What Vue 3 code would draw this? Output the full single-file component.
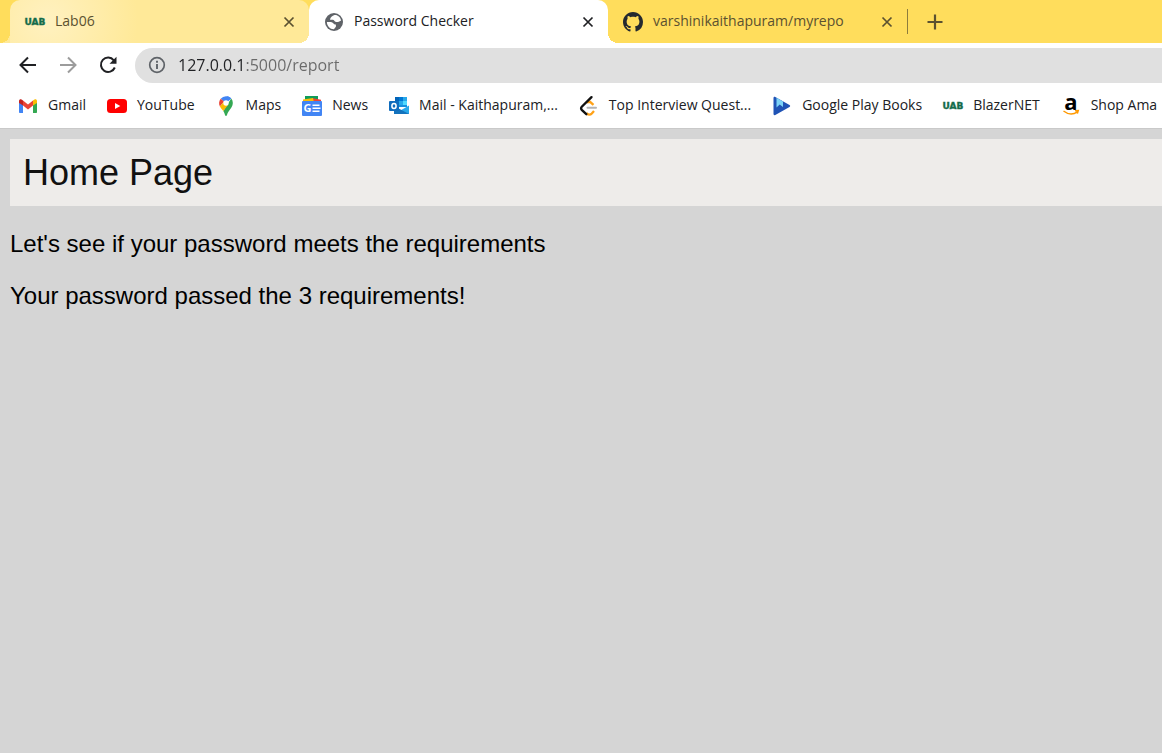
<script setup>
import { ref } from 'vue'

const address = ref('127.0.0.1:5000/report')

const tabs = [
  { icon: 'uab', title: 'Lab06', state: 'glow' },
  { icon: 'globe', title: 'Password Checker', state: 'active' },
  { icon: 'github', title: 'varshinikaithapuram/myrepo', state: 'idle' },
]

const bookmarks = [
  { icon: 'gmail', label: 'Gmail' },
  { icon: 'youtube', label: 'YouTube' },
  { icon: 'maps', label: 'Maps' },
  { icon: 'news', label: 'News' },
  { icon: 'outlook', label: 'Mail - Kaithapuram,...' },
  { icon: 'leetcode', label: 'Top Interview Quest...' },
  { icon: 'play', label: 'Google Play Books' },
  { icon: 'uab', label: 'BlazerNET' },
  { icon: 'amazon', label: 'Shop Ama' },
]
</script>

<template>
  <div class="browser">
    <header class="chrome">
      <div class="tab-strip" role="tablist">
        <div v-for="tab in tabs" :key="tab.title" class="tab" :class="tab.state">
          <button class="tab-main" type="button" role="tab" :aria-selected="tab.state === 'active'">
            <svg v-if="tab.icon === 'uab'" class="icon" viewBox="0 0 20 20" aria-hidden="true">
              <text class="uab-text" x="10" y="13" text-anchor="middle">UAB</text>
            </svg>
            <svg v-else-if="tab.icon === 'globe'" class="icon" viewBox="0 0 20 20" aria-hidden="true">
              <circle cx="10" cy="10" r="9" fill="#5f6368" />
              <path d="M10.500 3C8.200 3.600 6.300 5.300 6 7.800h2.800c1.500 0 1.500 2.200 3.200 2.200h2c1 0 1.500-1.300 3-1.300C16.800 5.300 14 2.800 10.500 3z" fill="#fff" />
              <path d="M2.900 10h4c2.300 0 2.600 2.500 4 2.500h1v2.200l-2 2.500C6 17.300 2.900 14 2.900 10z" fill="#fff" />
            </svg>
            <svg v-else class="icon" viewBox="0 0 16 16" aria-hidden="true">
              <path fill="#24292f" d="M8 0C3.580 0 0 3.580 0 8c0 3.540 2.290 6.530 5.470 7.590.4.070.55-.17.55-.38 0-.19-.01-.82-.01-1.490-2.010.37-2.530-.49-2.690-.94-.09-.23-.48-.94-.82-1.130-.28-.15-.68-.52-.01-.53.63-.01 1.080.58 1.230.82.72 1.210 1.870.87 2.330.66.070-.52.28-.87.51-1.070-1.780-.2-3.640-.89-3.640-3.950 0-.87.31-1.590.82-2.150-.08-.2-.36-1.020.08-2.120 0 0 .67-.21 2.200.82.64-.18 1.320-.27 2-.27s1.360.09 2 .27c1.530-1.040 2.200-.82 2.200-.82.44 1.100.16 1.920.08 2.120.51.56.82 1.270.82 2.150 0 3.070-1.870 3.750-3.650 3.950.29.25.54.73.54 1.480 0 1.070-.01 1.930-.01 2.200 0 .21.15.46.55.38A8.010 8.010 0 0 0 16 8c0-4.420-3.580-8-8-8z" />
            </svg>
            <span class="tab-title">{{ tab.title }}</span>
          </button>
          <button class="tab-close" type="button" :aria-label="`Close ${tab.title}`">
            <svg viewBox="0 0 12 12" aria-hidden="true"><path d="M1.500 1.500l9 9M10.500 1.500l-9 9" stroke="currentColor" stroke-width="1.700" /></svg>
          </button>
        </div>
        <button class="new-tab" type="button" aria-label="New tab">
          <svg viewBox="0 0 16 16" aria-hidden="true"><path d="M8 .5v15M.5 8h15" stroke="currentColor" stroke-width="2.200" /></svg>
        </button>
      </div>

      <div class="toolbar">
        <button class="nav" type="button" aria-label="Back">
          <svg viewBox="0 0 20 20" aria-hidden="true"><path d="M18 10H3M10 2.500L2.500 10l7.500 7.500" /></svg>
        </button>
        <button class="nav faded" type="button" aria-label="Forward">
          <svg viewBox="0 0 20 20" aria-hidden="true"><path d="M2 10h15M10 2.500l7.500 7.500-7.500 7.500" /></svg>
        </button>
        <button class="nav" type="button" aria-label="Reload">
          <svg viewBox="0 0 20 20" aria-hidden="true">
            <path d="M15.800 5.300A7.200 7.200 0 1 0 16.800 12.500" />
            <path d="M18.500 1.800v7h-7z" fill="currentColor" stroke="none" />
          </svg>
        </button>
        <div class="omnibox">
          <button class="site-info" type="button" aria-label="View site information">
            <svg viewBox="0 0 18 18" aria-hidden="true">
              <circle cx="9" cy="9" r="7.300" fill="none" stroke="#5f6368" stroke-width="1.700" />
              <path d="M9 8v5M9 4.800v2" stroke="#5f6368" stroke-width="1.900" />
            </svg>
          </button>
          <input v-model="address" class="address" type="text" aria-label="Address" spellcheck="false" />
        </div>
      </div>

      <nav class="bookmarks" aria-label="Bookmarks">
        <a v-for="mark in bookmarks" :key="mark.label" class="bookmark" href="#">
          <svg v-if="mark.icon === 'gmail'" class="icon" viewBox="0 0 20 20" aria-hidden="true">
            <path d="M1 6v10.200c0 .5.300.8.800.8H5V8z" fill="#4285f4" />
            <path d="M19 6v10.200c0 .5-.3.800-.8.800H15V8z" fill="#34a853" />
            <path d="M5 9.500V4.600l5 3.800 5-3.800v4.900l-5 3.900z" fill="#ea4335" />
            <path d="M1 7V5.200C1 3.200 3 2.800 4.300 3.900l.7.600v5z" fill="#c5221f" />
            <path d="M19 7V5.200c0-2-2-2.400-3.300-1.300l-.7.600v5z" fill="#fbbc04" />
          </svg>
          <svg v-else-if="mark.icon === 'youtube'" class="icon" viewBox="0 0 20 20" aria-hidden="true">
            <rect x="0" y="3" width="20" height="14" rx="3.500" fill="#f00" />
            <path d="M8 7l5.300 3L8 13z" fill="#fff" />
          </svg>
          <svg v-else-if="mark.icon === 'maps'" class="icon" viewBox="0 0 20 20" aria-hidden="true">
            <path d="M10 .2c2 0 3.900.9 5.200 2.300L10 7.200 4.700 2.700A7 7 0 0 1 10 .2z" fill="#4285f4" />
            <path d="M4.700 2.700L8 5.400 3.900 10.600C2.500 7.800 3 4.700 4.700 2.700z" fill="#ea4335" />
            <path d="M15.200 2.500c2.200 2.500 2.100 6.200.2 9-2.400 3.300-3.600 4.700-4.400 7.400-.4 1.400-1.600 1.400-2 0-.4-1.500-1-2.700-1.700-3.800z" fill="#34a853" />
            <path d="M12.200 8.800l-4.900 6.300c-1.300-1.700-2.600-3-3.400-4.500l4.100-5z" fill="#fbbc04" />
            <path d="M15.200 2.500L11.500 5l-2.300-2.200 1.900-2.500c1.600.2 3.100 1 4.100 2.200z" fill="#4285f4" />
            <circle cx="10" cy="7" r="2.700" fill="#fff" />
          </svg>
          <svg v-else-if="mark.icon === 'news'" class="icon" viewBox="0 0 20 20" aria-hidden="true">
            <path d="M3 0h13v8H3z" fill="#0f9d58" />
            <path d="M10 2l9 1.800V8h-9z" fill="#ea4335" />
            <path d="M1 3.500l10-1.500 1 5H1z" fill="#fbbc04" />
            <rect y="5" width="20" height="15" rx="1" fill="#4285f4" />
            <text x="1.500" y="16" class="news-text">G</text>
            <path d="M10.500 9.200h7M10.500 12.200h8M10.500 15.200h7" stroke="#fff" stroke-width="1.600" />
          </svg>
          <svg v-else-if="mark.icon === 'outlook'" class="icon" viewBox="0 0 20 20" aria-hidden="true">
            <path d="M6 1h12v10H6z" fill="#1490df" />
            <path d="M6 1h4v4H6z" fill="#0364b8" />
            <path d="M10 1h4v4h-4z" fill="#0078d4" />
            <path d="M14 1h4v4h-4z" fill="#28a8ea" />
            <path d="M14 5h4v4h-4z" fill="#50d9ff" />
            <path d="M10 5h4v4h-4z" fill="#28a8ea" />
            <path d="M5 10l8 5 7-5v8H5z" fill="#1490df" />
            <path d="M20 9.500v8.500H5.500z" fill="#28a8ea" />
            <path d="M5 10l15 8H5z" fill="#1473bd" />
            <rect y="5" width="10" height="10" rx="1" fill="#0f6cbd" />
            <ellipse cx="5" cy="10" rx="2.100" ry="2.500" fill="none" stroke="#fff" stroke-width="1.500" />
          </svg>
          <svg v-else-if="mark.icon === 'leetcode'" class="icon" viewBox="0 0 20 20" aria-hidden="true">
            <path d="M8 6.300L11 5.800l3.500 3M7.300 17c1.500 2.100 4 2.100 5.500.5l2.200-2.500" fill="none" stroke="#ffa116" stroke-width="2.300" />
            <path d="M12.500 1.200L3 10.500c-1.200 1.200-1.200 2.500 0 3.700l4.300 4" fill="none" stroke="#111" stroke-width="2.400" stroke-linecap="round" />
            <path d="M8.500 11.800H17" stroke="#b3b3b3" stroke-width="2" stroke-linecap="round" />
          </svg>
          <svg v-else-if="mark.icon === 'play'" class="icon" viewBox="0 0 20 20" aria-hidden="true">
            <path d="M1.500 2c0-1 1-1.400 1.800-1L17.500 9c.9.500.9 1.500 0 2L3.300 19c-.8.500-1.800 0-1.800-1z" fill="#1f53b5" />
            <path d="M4.500 1.700L11 5.400v5.600L7.700 8.500l-3.200 3z" fill="#7cd3f7" />
          </svg>
          <svg v-else-if="mark.icon === 'uab'" class="icon" viewBox="0 0 20 20" aria-hidden="true">
            <text class="uab-text" x="10" y="13" text-anchor="middle">UAB</text>
          </svg>
          <svg v-else class="icon" viewBox="0 0 20 20" aria-hidden="true">
            <text class="amazon-text" x="10" y="14" text-anchor="middle">a</text>
            <path d="M2.500 15c4.500 3.500 10 3.500 14 .8M14 14.800l3.300-.2-.9 3" fill="none" stroke="#f90" stroke-width="1.400" />
          </svg>
          <span>{{ mark.label }}</span>
        </a>
      </nav>
    </header>

    <main class="page">
      <h1 class="banner">Home Page</h1>
      <p>Let's see if your password meets the requirements</p>
      <p>Your password passed the 3 requirements!</p>
    </main>
  </div>
</template>

<style>
body {
  margin: 0;
  background: #d5d5d5;
}
</style>

<style scoped>
.browser {
  min-height: 100vh;
  overflow: hidden;
  background: #d5d5d5;
}

.chrome {
  background: #fff;
  border-bottom: 1px solid #c9c9c9;
  font-family: "Open Sans", "Noto Sans", sans-serif;
  font-size: 14px;
  color: #202124;
}

button {
  display: flex;
  align-items: center;
  margin: 0;
  padding: 0;
  border: 0;
  background: none;
  color: inherit;
  font: inherit;
}

svg {
  display: block;
  flex: none;
}

.icon {
  width: 20px;
  height: 20px;
  overflow: visible;
}

.uab-text {
  font: bold 9px "DejaVu Sans", sans-serif;
  fill: #146b4a;
  stroke: #146b4a;
  stroke-width: 0.4px;
}

.news-text {
  font: bold 11px "Open Sans", sans-serif;
  fill: #fff;
}

.amazon-text {
  font: bold 22px "Open Sans", sans-serif;
  fill: #000;
}

.tab-strip {
  display: flex;
  height: 43px;
  padding-left: 10px;
  background: #ffdd5c;
}

.tab {
  position: relative;
  display: flex;
  align-items: center;
  box-sizing: border-box;
  width: 299px;
  padding: 0 14px 0 15px;
  border-radius: 10px 10px 0 0;
  color: #5b5130;
}

.tab-main {
  flex: 1;
  min-width: 0;
  height: 100%;
  gap: 10px;
}

.tab-title {
  padding-bottom: 2px;
  white-space: nowrap;
}

.tab-close svg {
  width: 12px;
  height: 12px;
}

.glow {
  background: radial-gradient(circle at 38px 20px, #fff1c0, #ffe998 90px);
}

.active {
  background: #fff;
  color: #202124;
}

.glow::before,
.active::before,
.active::after {
  content: "";
  position: absolute;
  bottom: 0;
  width: 10px;
  height: 10px;
}

.glow::before {
  left: -10px;
  background: radial-gradient(circle at 0 0, transparent 10px, #ffe998 10px);
}

.active::before {
  left: -10px;
  background: radial-gradient(circle at 0 0, transparent 10px, #fff 10px);
}

.active::after {
  right: -10px;
  background: radial-gradient(circle at 100% 0, transparent 10px, #fff 10px);
}

.new-tab {
  position: relative;
  padding: 0 20px;
  color: #5b5130;
}

.new-tab::before {
  content: "";
  position: absolute;
  left: 0;
  width: 1px;
  height: 25px;
  background: #8d7c3c;
}

.new-tab svg {
  width: 16px;
  height: 16px;
}

.toolbar {
  display: flex;
  align-items: center;
  height: 44px;
  padding-left: 18px;
}

.nav {
  margin-right: 20px;
}

.nav:nth-of-type(3) {
  margin-right: 17px;
}

.nav svg {
  width: 20px;
  height: 20px;
  fill: none;
  stroke: currentColor;
  stroke-width: 2;
}

.faded {
  color: #9c9c9c;
}

.omnibox {
  flex: 1;
  display: flex;
  align-items: center;
  gap: 12px;
  height: 35px;
  padding-left: 13px;
  border-radius: 18px 0 0 18px;
  background: #e0e0e0;
}

.site-info svg {
  width: 18px;
  height: 18px;
}

.address {
  flex: 1;
  min-width: 0;
  height: 24px;
  padding: 0;
  border: 0;
  outline: 0;
  font: 16px/24px "Open Sans", "Noto Sans", sans-serif;
  color: transparent;
  background: linear-gradient(90deg, #202124 67px, #6a6a6a 67px);
  background-clip: text;
  -webkit-background-clip: text;
}

.bookmarks {
  display: flex;
  align-items: center;
  gap: 21px;
  height: 41px;
  padding-left: 18px;
}

.bookmark {
  display: flex;
  flex: none;
  align-items: center;
  gap: 10px;
  padding-bottom: 4px;
  color: #202124;
  text-decoration: none;
  white-space: nowrap;
}

.bookmark span {
  padding-bottom: 2px;
}

.page {
  padding: 10px 0 0 10px;
  font-family: "Liberation Sans", Arial, sans-serif;
  font-size: 24px;
  line-height: 28px;
  color: #000;
}

.banner {
  margin: 0;
  padding: 12px 13px;
  background: #eeecea;
  color: #111;
  font-size: 36px;
  font-weight: 400;
  line-height: 43px;
}

p {
  margin: 24px 0;
}
</style>
